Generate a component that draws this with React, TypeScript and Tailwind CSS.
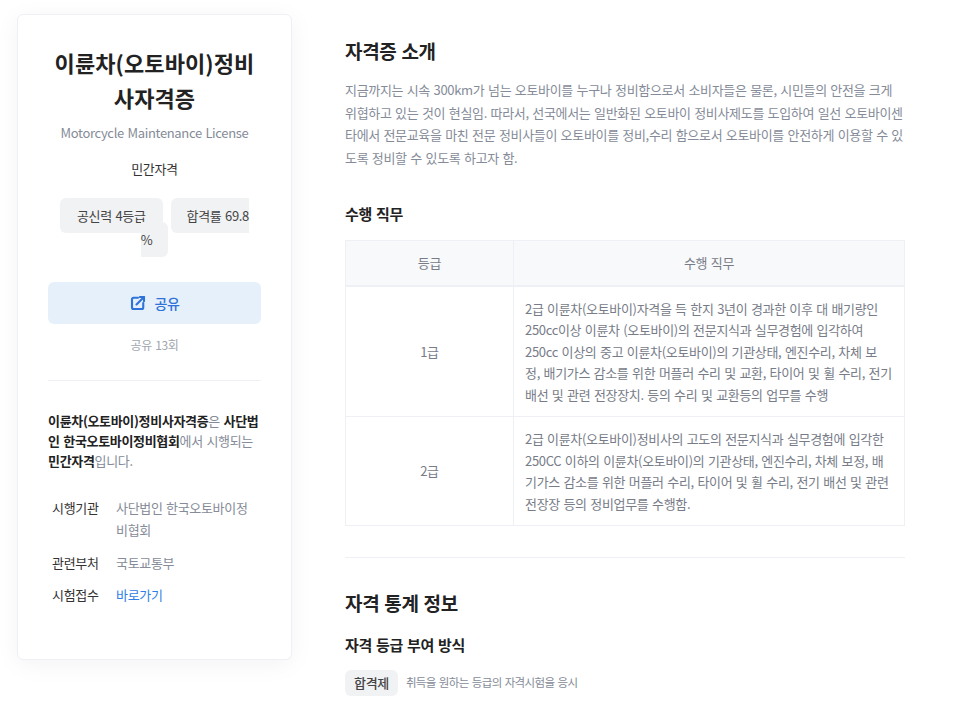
const rows = [
  {
    grade: "1급",
    lines:
      "2급 이륜차(오토바이)자격을 득 한지 3년이 경과한 이후 대 배기량인 250cc이상 이륜차 (오토바이)의 전문지식과 실무경험에 입각하여 250cc 이상의 중고 이륜차(오토바이)의 기관상태, 엔진수리, 차체 보\n정, 배기가스 감소를 위한 머플러 수리 및 교환, 타이어 및 휠 수리, 전기 배선 및 관련 전장장치. 등의 수리 및 교환등의 업무를 수행",
  },
  {
    grade: "2급",
    lines:
      "2급 이륜차(오토바이)정비사의 고도의 전문지식과 실무경험에 입각한 250CC 이하의 이륜차(오토바이)의 기관상태, 엔진수리, 차체 보정, 배기가스 감소를 위한 머플러 수리, 타이어 및 휠 수리, 전기 배선 및 관련 전장장 등의 정비업무를 수행함.",
  },
];

function ShareIcon() {
  return (
    <svg width="18" height="18" viewBox="0 0 24 24" fill="none" stroke="currentColor" strokeWidth="2.8" strokeLinecap="round" strokeLinejoin="round">
      <path d="M12 5H6a2 2 0 0 0-2 2v11a2 2 0 0 0 2 2h11a2 2 0 0 0 2-2v-6" />
      <path d="M10 14 20 4" />
      <path d="M14.5 4H20v5.5" />
    </svg>
  );
}

export default function App() {
  return (
    <div className="w-[966px] h-[709px] overflow-hidden bg-white font-['Noto_Sans_CJK_KR',sans-serif] tracking-[-0.33px] [word-spacing:1px] flex items-start pl-[17px] pt-[14px]">
      {/* left card */}
      <aside className="w-[275px] h-[646px] shrink-0 rounded-md border border-[#eef0f6] bg-white px-[30px] pt-[30px] shadow-[0_4px_24px_rgba(0,0,0,0.05)]">
        <h1 className="text-center text-[22px] leading-[35px] font-bold tracking-[0.1px] text-[#222]">
          이륜차(오토바이)정비사자격증
        </h1>
        <p className="mt-[7px] text-center text-[13px] leading-[21px] text-[#858b98]">
          Motorcycle Maintenance License
        </p>
        <p className="mt-[15px] text-center text-[13px] leading-[21px] text-[#333]">민간자격</p>

        <div className="mt-[25px] text-center text-[13px] leading-[24px] text-[#444]">
          <span className="rounded-md bg-[#f1f2f4] px-[17px] py-2">공신력 4등급</span>
          <span className="ml-2 rounded-md bg-[#f1f2f4] px-4 py-2">
            합격률 69.8
            <wbr />%
          </span>
        </div>

        <button className="mt-[30px] flex h-[42px] w-full items-center justify-center gap-[7px] rounded-md bg-[#e6f0fb] text-[14px] font-medium text-[#2f73d9]">
          <ShareIcon />
          공유
        </button>
        <p className="mt-[11px] text-center text-[12px] leading-[20px] text-[#a1a5ad]">공유 13회</p>

        <hr className="mt-[25px] border-[#eef0f6]" />

        <p className="mt-[30px] text-[13px] leading-[20px] text-[#858b98]">
          <b className="font-bold text-[#222]">이륜차(오토바이)정비사자격증</b>은{" "}
          <b className="font-bold text-[#222]">사단법인 한국오토바이정비협회</b>에서 시행되는{" "}
          <b className="font-bold text-[#222]">민간자격</b>입니다.
        </p>

        <dl className="mt-[26px] flex flex-col gap-[10.5px] text-[13px] leading-[22px]">
          <div className="flex">
            <dt className="w-[68px] shrink-0 pl-[4px] text-[#333]">시행기관</dt>
            <dd className="pr-[8px] text-[#858b98]">사단법인 한국오토바이정비협회</dd>
          </div>
          <div className="flex">
            <dt className="w-[68px] shrink-0 pl-[4px] text-[#333]">관련부처</dt>
            <dd className="text-[#858b98]">국토교통부</dd>
          </div>
          <div className="flex">
            <dt className="w-[68px] shrink-0 pl-[4px] text-[#333]">시험접수</dt>
            <dd className="text-[#2f7fe6]">바로가기</dd>
          </div>
        </dl>
      </aside>

      {/* main column */}
      <main className="ml-[53px] w-[560px] shrink-0 pt-[22px]">
        <h2 className="text-[19px] leading-[30px] font-bold text-[#222]">자격증 소개</h2>
        <p className="mt-[13px] text-[13px] leading-[22.5px] text-[#858b98]">
          지금까지는 시속 300km가 넘는 오토바이를 누구나 정비함으로서 소비자들은 물론, 시민들의 안전을 크게 위협하고 있는 것이 현실임. 따라서, 선국에서는 일반화된 오토바이 정비사제도를 도입하여 일선 오토바이센타에서 전문교육을 마친 전문 정비사들이 오토바이를 정비,수리 함으로서 오토바이를 안전하게 이용할 수 있도록 정비할 수 있도록 하고자 함.
        </p>

        <h3 className="mt-[33px] text-[15px] leading-[24px] font-bold text-[#222]">수행 직무</h3>

        <table className="mt-[14px] w-full table-fixed border-collapse text-[13px] text-[#777c88]">
          <thead>
            <tr className="h-[45px] bg-[#f8f9fb]">
              <th className="w-[168px] border border-b-2 border-[#eef0f6] font-normal">등급</th>
              <th className="border border-b-2 border-[#eef0f6] font-normal">수행 직무</th>
            </tr>
          </thead>
          <tbody>
            {rows.map((row) => (
              <tr key={row.grade}>
                <td className="border border-[#eef0f6] text-center">{row.grade}</td>
                <td className="whitespace-pre-line border border-[#eef0f6] px-[11px] py-[11px] leading-[21.5px]">{row.lines}</td>
              </tr>
            ))}
          </tbody>
        </table>

        <hr className="mt-[31px] border-[#eef0f6]" />

        <h2 className="mt-[29px] text-[19px] leading-[32px] font-bold text-[#222]">자격 통계 정보</h2>
        <h3 className="mt-[14px] text-[15px] leading-[24px] font-bold text-[#222]">자격 등급 부여 방식</h3>
        <div className="mt-[13px] flex items-center gap-[8px]">
          <span className="rounded-md bg-[#f1f2f4] px-[9px] py-[2px] text-[13px] leading-[22px] font-medium text-[#444]">
            합격제
          </span>
          <span className="text-[11.5px] tracking-[-0.6px] text-[#858b98]">취득을 원하는 등급의 자격시험을 응시</span>
        </div>
      </main>
    </div>
  );
}
